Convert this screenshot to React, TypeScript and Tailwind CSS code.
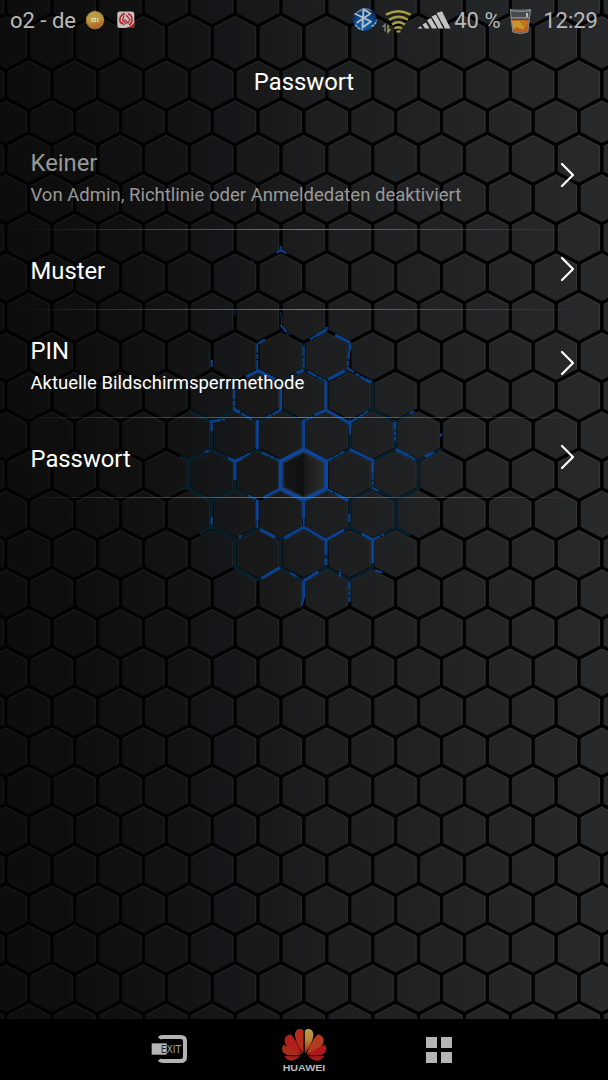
import React from "react";

const PITCH = 45.85;
const SHOULDER = 12;

type HexRow = { top: number; next: number; shifted: boolean };

function buildRows(): HexRow[] {
  const tops = [-25, 14, 58.5, 98.5];
  for (let y = 133; y < 1100; y += 39.5) tops.push(y);
  return tops.slice(0, -1).map((top, i) => ({ top, next: tops[i + 1], shifted: i % 2 === 1 }));
}

function Honeycomb() {
  const cells: React.ReactElement[] = [];
  buildRows().forEach((row, r) => {
    for (let c = -1; c < 15; c++) {
      const l = (row.shifted ? 28.7 : 5.8) + (c - 1) * PITCH + 1.75;
      const rt = l + PITCH - 3.5;
      const m = (l + rt) / 2;
      const a = row.top + 2;
      const s = row.top + SHOULDER + 1.1;
      const b = row.next - 1.1;
      const e = row.next + SHOULDER - 2;
      cells.push(
        <g key={`${r}-${c}`}>
          <path d={`M${m} ${a}L${rt} ${s}V${b}L${m} ${e}L${l} ${b}V${s}Z`} fill="url(#cell)" />
          <path d={`M${l + 1} ${s}L${m} ${a + 0.6}L${rt - 0.6} ${s + 0.3}V${b}`} fill="none" stroke="url(#edge)" strokeWidth="1" />
        </g>
      );
    }
  });
  return (
    <svg className="absolute inset-0 h-full w-full" viewBox="0 0 608 1080" aria-hidden="true">
      <defs>
        <linearGradient id="cell" gradientUnits="userSpaceOnUse" x1="0" y1="0" x2="608" y2="0">
          <stop offset="0" stopColor="#0d0d0d" />
          <stop offset="0.15" stopColor="#0f0f0f" />
          <stop offset="0.3" stopColor="#131314" />
          <stop offset="0.34" stopColor="#131517" />
          <stop offset="0.385" stopColor="#15171a" />
          <stop offset="0.4" stopColor="#181818" />
          <stop offset="0.46" stopColor="#1a1a1a" />
          <stop offset="0.5" stopColor="#1c1d1e" />
          <stop offset="0.75" stopColor="#222325" />
          <stop offset="1" stopColor="#28292a" />
        </linearGradient>
        <linearGradient id="edge" gradientUnits="userSpaceOnUse" x1="0" y1="0" x2="608" y2="0">
          <stop offset="0" stopColor="#171717" />
          <stop offset="0.4" stopColor="#232425" />
          <stop offset="1" stopColor="#363637" />
        </linearGradient>
        <linearGradient id="core" x1="0" y1="0" x2="1" y2="0">
          <stop offset="0" stopColor="#141617" />
          <stop offset="0.5" stopColor="#0f1011" />
          <stop offset="0.55" stopColor="#1b1b1b" />
          <stop offset="1" stopColor="#292a2a" />
        </linearGradient>
      </defs>
      <rect width="608" height="1080" fill="#020202" />
      {cells}
      <g fill="none" strokeLinejoin="round">
        <g transform="translate(180 230) scale(.33333)">
          <path
            stroke="#06202d"
            strokeWidth="9"
            d="M165 455V538L95 575M578 455V538L647 578L700 545M510 578L578 538M232 422L302 455L371 420M302 540L371 575L438 540M27 540L95 575M165 538L232 575L302 540M510 420L438 455M371 340V420L438 455"
          />
          <path
            stroke="#0b428f"
            strokeWidth="9"
            d="M445 448L495 422M198 440L235 422L285 448M438 455V540L510 580M510 338V360M302 462V540M465 315L510 338M410 316L440 300M350 430L371 420M555 448L575 457M162 538L180 546M438 540L405 555M95 575V600M232 578V600M371 572V600M510 578V600M645 580V600"
          />
          <path
            stroke="#0b428f"
            strokeWidth="6"
            strokeDasharray="28 5 14 3"
            d="M302 48V60L290 69M302 60L318 70M302 285L325 315M235 340L255 328M232 340V415M371 350V415M390 328L410 316M440 290V300M508 360L503 415L555 448M302 540L265 560M162 480V538L215 568M95 575L135 568M510 578L565 543M385 425L438 455M95 390V410M232 422V415M690 550l14 -5M371 572L400 560"
          />
          <path stroke="#0b356f" strokeWidth="3" d="M165 240v16M300 245l4 14V285M215 90l4 8" />
        </g>
        <g transform="translate(180 420) scale(.33333)">
          <path
            stroke="#06202d"
            strokeWidth="9"
            d="M0 205L27 206M0 110L27 122V206L95 242V322L165 360V443L232 480M27 122L95 88V0M95 88L165 124V206L232 240M165 206L95 242M95 322L60 342M165 360L232 325M232 322L302 358V443L371 482M302 358L371 322M510 0V88L438 124M232 88L302 124M165 124L232 88M438 206L510 242V322L578 360M438 360L510 322M438 443L510 480L578 443V360M510 480V545M578 124V206L510 242M578 206L647 242V322L578 360M647 242L716 206V122L785 88M647 88V0M647 88L716 122M578 124L647 88M647 322L690 346M438 360V443L371 482M165 443L180 450M232 480L302 443"
          />
          <path d="M371 98L429 129V201L371 231L311 201V129Z" fill="url(#core)" stroke="#3b3e40" strokeWidth="2" />
          <path stroke="#0c4599" strokeWidth="12" d="M302 124L371 88L438 124V206L371 240L302 206Z" />
          <path
            stroke="#0b428f"
            strokeWidth="9"
            d="M232 0V88M371 0V88M510 0V20M95 0V10M145 114L165 124V180M188 112L165 124M510 88L578 122V155M470 222L505 242M302 206L250 233M232 240V300M371 240V295M371 322L438 360V405M371 322L312 355M438 360L492 330M240 328L285 352M545 342L578 360V430M300 443L245 474M371 482V535M371 482L415 455M438 415V435M647 88L685 107M735 110L755 100"
          />
          <path
            stroke="#0b428f"
            strokeWidth="6"
            strokeDasharray="24 5 12 4"
            d="M510 18V45M645 5V62M95 10V35M188 112L212 98M75 96l12 -5M245 98L298 121M438 124L492 95M578 155V205L597 213M685 107L708 121M755 100L762 96M438 206L470 222M205 226L232 240M232 300V328M371 295V322M508 282V308M95 290V318M578 360L612 342M371 535L362 565M330 458L350 470M508 485V545M585 450L608 458M480 456v14M780 50l6 -10M180 345v10"
          />
        </g>
      </g>
    </svg>
  );
}

function StatusBar() {
  return (
    <header className="flex h-[42px] items-center justify-between pl-[10px] pr-[10px] text-[22px] leading-[42px] text-[#b9b9b9]">
      <div className="flex items-center">
        <span className="w-[75px] whitespace-nowrap">o2 - de</span>
        <svg className="-mt-[2px] h-[20px] w-[20px]" viewBox="0 0 20 20">
          <defs>
            <linearGradient id="coin" x1="0" y1="0" x2="0.3" y2="1">
              <stop offset="0" stopColor="#b3a64c" />
              <stop offset="0.6" stopColor="#b9953f" />
              <stop offset="1" stopColor="#b4602c" />
            </linearGradient>
          </defs>
          <circle cx="10" cy="10" r="8.6" fill="url(#coin)" stroke="#b98f3c" strokeWidth="1.2" strokeDasharray="1.5 .6" />
          <path d="M7 12V8.5H10.5V12M12.8 8V12M8.8 10.2V12" fill="none" stroke="#ddd5a2" strokeWidth="1.3" />
        </svg>
        <svg className="-mt-[3px] ml-[12px] h-[18px] w-[18px]" viewBox="0 0 18 18">
          <rect x=".3" y=".5" width="17" height="16.5" rx="2.5" fill="#c4c0be" />
          <path d="M17.3 11.5V15q0 2-2.500 2H8q6-1 9.300-5.500Z" fill="#ad1518" />
          <path d="M8 2.500A6.200 6.200 0 0 0 4.500 12.800M11 2.700A6.300 6.300 0 0 1 12 14M7 14L4.500 11" fill="none" stroke="#b3262b" strokeWidth="1.600" />
          <path d="M7 4.500L5.500 9L9.500 13M9 4L13 8.500L11 12L7.500 8.500" fill="none" stroke="#b3262b" strokeWidth="1.200" />
        </svg>
      </div>
      <div className="flex items-center">
        <svg className="-mt-[3px] h-[27px] w-[28px]" viewBox="0 0 28 27">
          <defs>
            <radialGradient id="orb" cx=".5" cy=".7" r=".65">
              <stop offset="0" stopColor="#1768ad" />
              <stop offset=".6" stopColor="#0b4283" />
              <stop offset="1" stopColor="#08264f" />
            </radialGradient>
          </defs>
          <circle cx="13.500" cy="13" r="11.800" fill="url(#orb)" />
          <path d="M4 8Q12 -2 22 5Q13 3 4 8Z" fill="#8fa5b8" opacity=".6" />
          <path d="M3.500 7.500L20 15.500L11.500 21.500L12.500 3.500L19.500 7.500L5.500 17" fill="none" stroke="#b4bfca" strokeWidth="1.900" strokeLinejoin="round" />
          <path d="M4.500 18.500Q7 23.500 12.500 23.500M20.500 20.500Q25 18.500 25.500 14" fill="none" stroke="#88aed0" strokeWidth="1.500" strokeDasharray="3 .8" />
        </svg>
        <svg className="mt-[2px] ml-[3px] mr-[2px] h-[24px] w-[30px]" viewBox="0 0 30 24">
          <g fill="none" stroke="#a89e43" strokeWidth="2.500">
            <path d="M4 4.700Q16.500-2 28.500 4.700M7 9.700Q16.500 4 26 9.700M10 14.500Q16.500 10 23 14.500M12.500 18.500Q16.500 16 20 18.500" />
          </g>
          <path d="M14.500 20.500h4v2h-4z" fill="#a89e43" />
          <path d="M.5 17L3 14.500V21.500" fill="none" stroke="#8a8a8a" strokeWidth="1.300" />
          <path d="M6 15V22L8.500 19" fill="none" stroke="#a89e43" strokeWidth="1.500" />
        </svg>
        <svg className="-mt-[2px] ml-[3px] h-[18px] w-[34px]" viewBox="0 0 34 18" fill="#c2c2c2">
          <path d="M.5 17.500L3.500 15L5.500 17.500ZM5.500 13.500L9 11.500L12.500 17.500H8ZM10 9L14 7L20 17.500H15ZM14.500 5.500L19 3.500L26.500 17.500H21.500ZM19.500 2L25 .3L33.500 17.500H28Z" />
        </svg>
        <span className="ml-[3px] w-[55px] whitespace-nowrap">40 %</span>
        <svg className="h-[28px] w-[23px]" viewBox="0 0 23 28">
          <path d="M1 2L3.500 25Q11 29 19 25L22 2Z" fill="#464a4e" />
          <path d="M2 13L3.500 24Q11 27 19.200 24L20.500 13Z" fill="#be5e20" />
          <path d="M3 14H11L18 16L14 23L8 20L4 22Z" fill="#c29a28" />
          <path d="M10 13h6l3 3-2 5-4-3Z" fill="#c3721f" />
          <path d="M1 2Q11 5 22 2V4Q12 6 1.300 4ZM1.500 10H21V11.500H1.700Z" fill="#85898d" />
          <path d="M1.300 2L3.800 25Q11 28 18.800 25L21.500 2" fill="none" stroke="#878b8e" strokeWidth="1" />
          <path d="M18 6V10" stroke="#b4b6b8" strokeWidth="2" />
        </svg>
        <span className="ml-[11px] whitespace-nowrap">12:29</span>
      </div>
    </header>
  );
}

function Chevron() {
  return (
    <svg className="mb-px mr-[33px] h-[26px] w-[15px] shrink-0" viewBox="0 0 15 26" fill="none" stroke="#fff" strokeWidth="2.2" strokeLinecap="round" strokeLinejoin="round">
      <path d="M2 2L13 13L2 24" />
    </svg>
  );
}

function Option({ title, summary, disabled }: { title: string; summary?: string; disabled?: boolean }) {
  return (
    <li className={summary ? "flex h-[108px] flex-col" : "flex h-[80px] flex-col"}>
      <button className={`flex flex-1 items-center justify-between pl-[30.5px] text-left ${disabled ? "text-[#999999]" : "text-white"}`}>
        <span className={summary ? "flex flex-col pt-[6px]" : "flex flex-col pt-[2px]"}>
          <span className="text-[23.8px] leading-[32px]">{title}</span>
          {summary && <span className="whitespace-nowrap text-[18.53px] leading-[32px]">{summary}</span>}
        </span>
        <Chevron />
      </button>
      <div className="h-px bg-linear-to-r from-[#4b728600] from-3% via-[#4f7f9b] to-[#4b728600] to-97%" />
    </li>
  );
}

const petals = [
  { d: "M-1.500 103V40C-5 29-24 30-27 46C-29 66-14 88-4 105Z", l: "#b82a18", r: "#b98a37" },
  { d: "M-7 107C-20 76-30 58-41 49C-59 53-63 70-52 84C-41 97-22 103-8 109Z", l: "#b3201c", r: "#b33a1e" },
  { d: "M-9 112C-24 98-44 87-62 80C-70 95-64 107-51 111C-38 113-24 112-9 112Z", l: "#a82c1b", r: "#b0191b" },
  { d: "M-12 115L-59 114C-51 128-39 131-28 126C-20 123-16 119-12 115Z", l: "#a0201a", r: "#ad181b" },
];

function NavBar() {
  return (
    <nav className="flex h-[61px] items-start bg-black pl-[151px] pt-[10px]">
      <svg className="mt-[6px] h-[30px] w-[37px]" viewBox="33 51 111 90">
        <path d="M58 61Q61 57 68 57H122Q135 57 135 70V116Q135 129 122 129H68Q61 129 58 125" fill="none" stroke="#b3b3b3" strokeWidth="12" />
        <path d="M35 76H80V110H35Z" fill="#b7b7b7" />
        <text x="62" y="104" fontSize="29" fontFamily="'DejaVu Sans', sans-serif" textLength="61" lengthAdjust="spacingAndGlyphs" fill="#a6a6a6"><tspan fill="#222">E</tspan>XIT</text>
      </svg>
      <svg className="ml-[94px] h-[44px] w-[44px]" viewBox="427 33 132 132">
        <defs>
          <linearGradient id="gold" x1="0" y1="0" x2="0" y2="1">
            <stop offset="0" stopColor="#b89a4c" />
            <stop offset=".45" stopColor="#b88636" />
            <stop offset="1" stopColor="#b0201b" />
          </linearGradient>
        </defs>
        {petals.map((p, i) => (
          <React.Fragment key={i}>
            <path d={p.d} fill={p.l} transform="translate(493 0)" />
            <path d={p.d} fill={i === 0 ? "url(#gold)" : p.r} transform="translate(494 0) scale(-1 1)" />
          </React.Fragment>
        ))}
        <text x="429" y="160" fontSize="27" fontWeight="700" fontFamily="'Liberation Sans', sans-serif" textLength="128" lengthAdjust="spacingAndGlyphs" fill="#b9b9b9">HUAWEI</text>
      </svg>
      <div className="ml-[100px] mt-[8px] grid grid-cols-2 gap-[4px]">
        <i className="size-[11px] bg-[#b5b5b5]" />
        <i className="size-[11px] bg-[#b5b5b5]" />
        <i className="size-[11px] bg-[#b5b5b5]" />
        <i className="size-[11px] bg-[#b5b5b5]" />
      </div>
    </nav>
  );
}

export default function App() {
  return (
    <div className="relative h-[1080px] w-[608px] overflow-hidden bg-black font-['Roboto',sans-serif]">
      <Honeycomb />
      <div className="relative flex h-full flex-col">
        <StatusBar />
        <h1 className="h-[80px] text-center text-[23.8px] leading-[80px] text-white">Passwort</h1>
        <ul className="flex-1">
          <Option title="Keiner" summary="Von Admin, Richtlinie oder Anmeldedaten deaktiviert" disabled />
          <Option title="Muster" />
          <Option title="PIN" summary="Aktuelle Bildschirmsperrmethode" />
          <Option title="Passwort" />
        </ul>
        <NavBar />
      </div>
    </div>
  );
}
